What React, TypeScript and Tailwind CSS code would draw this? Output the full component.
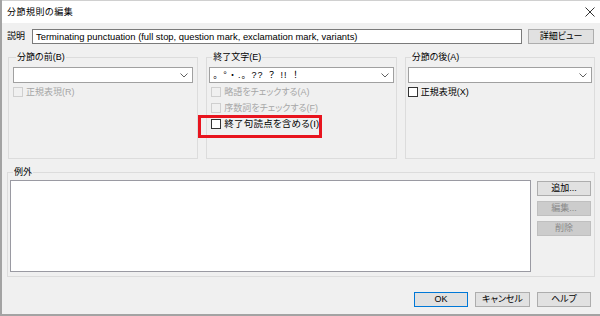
import React from "react";

function Chevron() {
  return (
    <svg width="8" height="5" viewBox="0 0 8 5" className="shrink-0">
      <path d="M0.5 0.5 L4 4 L7.5 0.5" fill="none" stroke="#606060" strokeWidth="1" />
    </svg>
  );
}

function Combo({ text }: { text?: string }) {
  return (
    <div className="h-[16px] bg-white border border-[#a0a0a0] flex items-center pl-[3px] pr-[4px]">
      <span className="flex-1 text-[9px] leading-none text-black tracking-[1px] whitespace-nowrap [font-feature-settings:normal]">{text}</span>
      <Chevron />
    </div>
  );
}

function Check({ label, disabled, big }: { label: string; disabled?: boolean; big?: boolean }) {
  return (
    <div className="flex items-center h-[12px] gap-[3px]">
      <div
        className={
          disabled
            ? "w-[10px] h-[10px] border border-[#cfcfcf] bg-[#f0f0f0] shrink-0"
            : "w-[10px] h-[10px] border border-[#333333] bg-white shrink-0"
        }
      />
      <span
        className={
          (disabled ? "text-[#a6a6a6] " : "text-black ") +
          (big ? "text-[9.5px] tracking-[0.2px] " : "text-[9px] ") +
          "leading-none whitespace-nowrap"
        }
      >
        {label}
      </span>
    </div>
  );
}

function Btn({ label, disabled, def, w }: { label: string; disabled?: boolean; def?: boolean; w: string }) {
  const cls = disabled
    ? "bg-[#cccccc] border-[#bfbfbf] text-[#8a8a8a]"
    : def
    ? "bg-[#e1e1e1] border-[#0078d7] text-black"
    : "bg-[#e1e1e1] border-[#adadad] text-black";
  return (
    <div className={`${w} h-[15px] border ${cls} flex items-center justify-center text-[9px] leading-none`}>
      {label}
    </div>
  );
}

export default function App() {
  return (
    <div className="w-[600px] h-[316px] bg-[#f0f0f0] border-l-2 border-b-2 border-[#a3a3a3] flex flex-col font-['Liberation_Sans','Noto_Sans_CJK_JP',sans-serif] [font-feature-settings:'palt'] overflow-hidden">
      {/* title bar */}
      <div className="h-[23px] bg-white border-t border-[#d0d0d0] flex items-center pl-[5px] pr-[5px] shrink-0">
        <span className="flex-1 text-[9px] leading-none text-black tracking-[0.5px]">分節規則の編集</span>
        <svg width="10" height="10" viewBox="0 0 10 10">
          <path d="M0.5 0.5 L9.5 9.5 M9.5 0.5 L0.5 9.5" stroke="#333" strokeWidth="1" />
        </svg>
      </div>

      {/* description row */}
      <div className="mt-[6px] h-[15px] flex items-center pl-[5px] pr-[6px] shrink-0">
        <span className="text-[9px] leading-none text-black w-[25px]">説明</span>
        <div className="flex-1 h-[15px] bg-white border border-[#7a7a7a] flex items-center pl-[3px]">
          <span className="text-[9.4px] leading-none text-black whitespace-nowrap">
            Terminating punctuation (full stop, question mark, exclamation mark, variants)
          </span>
        </div>
        <div className="ml-[6px]">
          <Btn label="詳細ビュー" w="w-[66px]" />
        </div>
      </div>

      {/* groups */}
      <div className="mt-[7px] ml-[6px] mr-[5px] grid grid-cols-3 gap-[8px] shrink-0">
        <fieldset className="h-[108px] border border-[#dcdcdc] px-[4px] pt-[4px]">
          <legend className="text-[9px] leading-[12px] text-black px-[1px] ml-[3px]">分節の前(B)</legend>
          <Combo />
          <div className="mt-[3px]">
            <Check label="正規表現(R)" disabled />
          </div>
        </fieldset>
        <fieldset className="h-[108px] border border-[#dcdcdc] px-[2px] pt-[4px]">
          <legend className="text-[9px] leading-[12px] text-black px-[1px] ml-[3px]">終了文字(E)</legend>
          <Combo text="。°・.。?? ？ !! ！" />
          <div className="mt-[3px] pl-[2px] flex flex-col gap-[4px]">
            <Check label="略語をチェックする(A)" disabled />
            <Check label="序数詞をチェックする(F)" disabled />
            <div className="relative">
              <Check label="終了句読点を含める(I)" big />
              <div className="absolute left-[-13px] top-[-3px] w-[124px] h-[23px] border-[3px] border-[#e8141e]" />
            </div>
          </div>
        </fieldset>
        <fieldset className="h-[108px] border border-[#dcdcdc] px-[2px] pt-[4px]">
          <legend className="text-[9px] leading-[12px] text-black px-[1px] ml-[3px]">分節の後(A)</legend>
          <Combo />
          <div className="mt-[3px]">
            <Check label="正規表現(X)" />
          </div>
        </fieldset>
      </div>

      {/* exceptions */}
      <fieldset className="mt-[7px] ml-[5px] mr-[5px] h-[111px] border border-[#dcdcdc] pl-[2px] pr-[3px] pt-[2px] shrink-0">
        <legend className="text-[9px] leading-[12px] text-black px-[1px] ml-[3px]">例外</legend>
        <div className="flex gap-[6px]">
          <div className="flex-1 h-[92px] bg-white border border-[#9a9aa2]" />
          <div className="flex flex-col gap-[5px] pt-[1px]">
            <Btn label="追加..." w="w-[54px]" />
            <Btn label="編集..." w="w-[54px]" disabled />
            <Btn label="削除" w="w-[54px]" disabled />
          </div>
        </div>
      </fieldset>

      {/* bottom buttons */}
      <div className="mt-[15px] flex justify-end gap-[7px] pr-[9px] shrink-0">
        <Btn label="OK" w="w-[54px]" def />
        <Btn label="キャンセル" w="w-[55px]" />
        <Btn label="ヘルプ" w="w-[54px]" />
      </div>
    </div>
  );
}
